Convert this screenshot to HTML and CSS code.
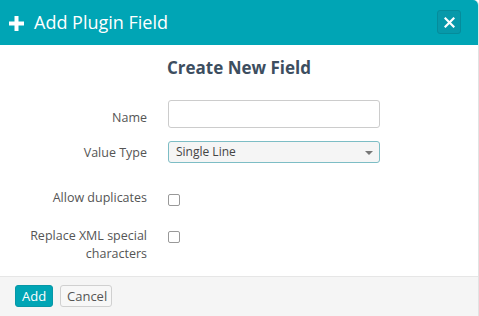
FILE: index.html
```html
<!DOCTYPE html>
<html lang="en">
<head>
  <meta charset="UTF-8" />
  <title>Add Plugin Field</title>
  <link rel="stylesheet" href="styles.css">
</head>
<body>
  <div class="dialog">
    <div class="dialog-header">
      <svg class="plus-icon" width="15" height="15" viewBox="0 0 15 15">
        <path d="M5.5 0h4v5.5H15v4H9.5V15h-4V9.5H0v-4h5.5z" fill="#fff"/>
      </svg>
      <span class="dialog-title">Add Plugin Field</span>
      <button class="close-btn" type="button">
        <svg width="11" height="11" viewBox="0 0 11 11">
          <path d="M1.5 1.5l8 8M9.5 1.5l-8 8" stroke="#fff" stroke-width="2.2" stroke-linecap="square"/>
        </svg>
      </button>
    </div>

    <div class="dialog-body">
      <h3>Create New Field</h3>
      <div class="form-row row-name">
        <label for="fieldName">Name</label>
        <input id="fieldName" type="text" class="text-input">
      </div>
      <div class="form-row row-type">
        <label for="valueType">Value Type</label>
        <div class="select-box" id="valueType">
          <span>Single Line</span>
          <span class="caret"></span>
        </div>
      </div>
      <div class="form-row row-dup">
        <label for="allowDup">Allow duplicates</label>
        <span class="checkbox" id="allowDup"></span>
      </div>
      <div class="form-row row-xml">
        <label for="replaceXml">Replace XML special characters</label>
        <span class="checkbox" id="replaceXml"></span>
      </div>
    </div>

    <div class="dialog-footer">
      <button class="btn btn-primary" type="button">Add</button>
      <button class="btn btn-default" type="button">Cancel</button>
    </div>
  </div>
</body>
</html>
```

FILE: styles.css
```css
body {
  margin: 0;
  font-family: "Open Sans", "Noto Sans", sans-serif;
  background-color: #fff;
  color: #555;
}
.dialog {
  width: 478px;
  height: 316px;
  display: flex;
  flex-direction: column;
  border-top-right-radius: 5px;
  box-shadow: 1px 0 0 #e2e2e2;
  overflow: hidden;
}
.dialog-header {
  height: 45px;
  background-color: #00a5b5;
  display: flex;
  align-items: center;
  padding: 0 17px 0 9px;
  color: #fff;
}
.plus-icon {
  margin-right: 10px;
  margin-top: 1px;
}
.dialog-title {
  font-size: 18px;
  flex: 1;
  margin-top: -1px;
}
.close-btn {
  width: 24px;
  height: 24px;
  padding: 0;
  border: 1px solid #058c9b;
  border-radius: 3px;
  background-color: #0799aa;
  display: flex;
  align-items: center;
  justify-content: center;
  margin-top: -1px;
}
.dialog-body {
  flex: 1;
  padding-top: 12px;
}
h3 {
  margin: 0 0 21px 0;
  font-size: 17px;
  line-height: 22px;
  font-weight: bold;
  color: #3d4e5f;
  text-align: center;
}
.form-row {
  display: flex;
  align-items: flex-start;
}
.form-row label {
  width: 126px;
  margin-left: 21px;
  margin-right: 21px;
  text-align: right;
  font-size: 12.5px;
  line-height: 18px;
  color: #555;
}
.row-name label {
  margin-top: 9px;
}
.row-type label {
  margin-top: 3px;
}
.text-input {
  width: 212px;
  height: 28px;
  box-sizing: border-box;
  border: 1px solid #ccc;
  border-radius: 3px;
  margin: 0;
}
.row-type {
  margin-top: 13px;
}
.select-box {
  width: 212px;
  height: 22px;
  box-sizing: border-box;
  border: 1px solid #7dbdc5;
  border-radius: 3px;
  background-color: #f5f5f5;
  font-size: 12px;
  line-height: 20px;
  color: #444;
  padding-left: 7px;
  display: flex;
  align-items: center;
  justify-content: space-between;
  padding-right: 6px;
}
.caret {
  width: 0;
  height: 0;
  border-left: 4px solid transparent;
  border-right: 4px solid transparent;
  border-top: 4px solid #777;
  margin-top: 2px;
}
.row-dup {
  margin-top: 26px;
}
.row-xml {
  margin-top: 20px;
}
.checkbox {
  width: 12px;
  height: 12px;
  box-sizing: border-box;
  border: 1px solid #999;
  border-radius: 2px;
  background: #fff;
}
.row-dup .checkbox {
  margin-top: 5px;
}
.row-xml .checkbox {
  margin-top: 4px;
}
.dialog-footer {
  height: 40px;
  box-sizing: border-box;
  background-color: #f5f5f5;
  border-top: 1px solid #e6e6e6;
  padding: 8px 15px 0 15px;
  display: flex;
  align-items: flex-start;
  gap: 7px;
}
.btn {
  height: 22px;
  box-sizing: border-box;
  font-family: "Open Sans", "Noto Sans", sans-serif;
  font-size: 13px;
  line-height: 20px;
  padding: 0 6px;
  border-radius: 3px;
  margin: 0;
}
.btn-primary {
  width: 38px;
  background-color: #00a5b5;
  border: 1px solid #0797a7;
  color: #fff;
}
.btn-default {
  width: 52px;
  background-color: #f7f7f7;
  border: 1px solid #d0d0d0;
  color: #555;
}
```
